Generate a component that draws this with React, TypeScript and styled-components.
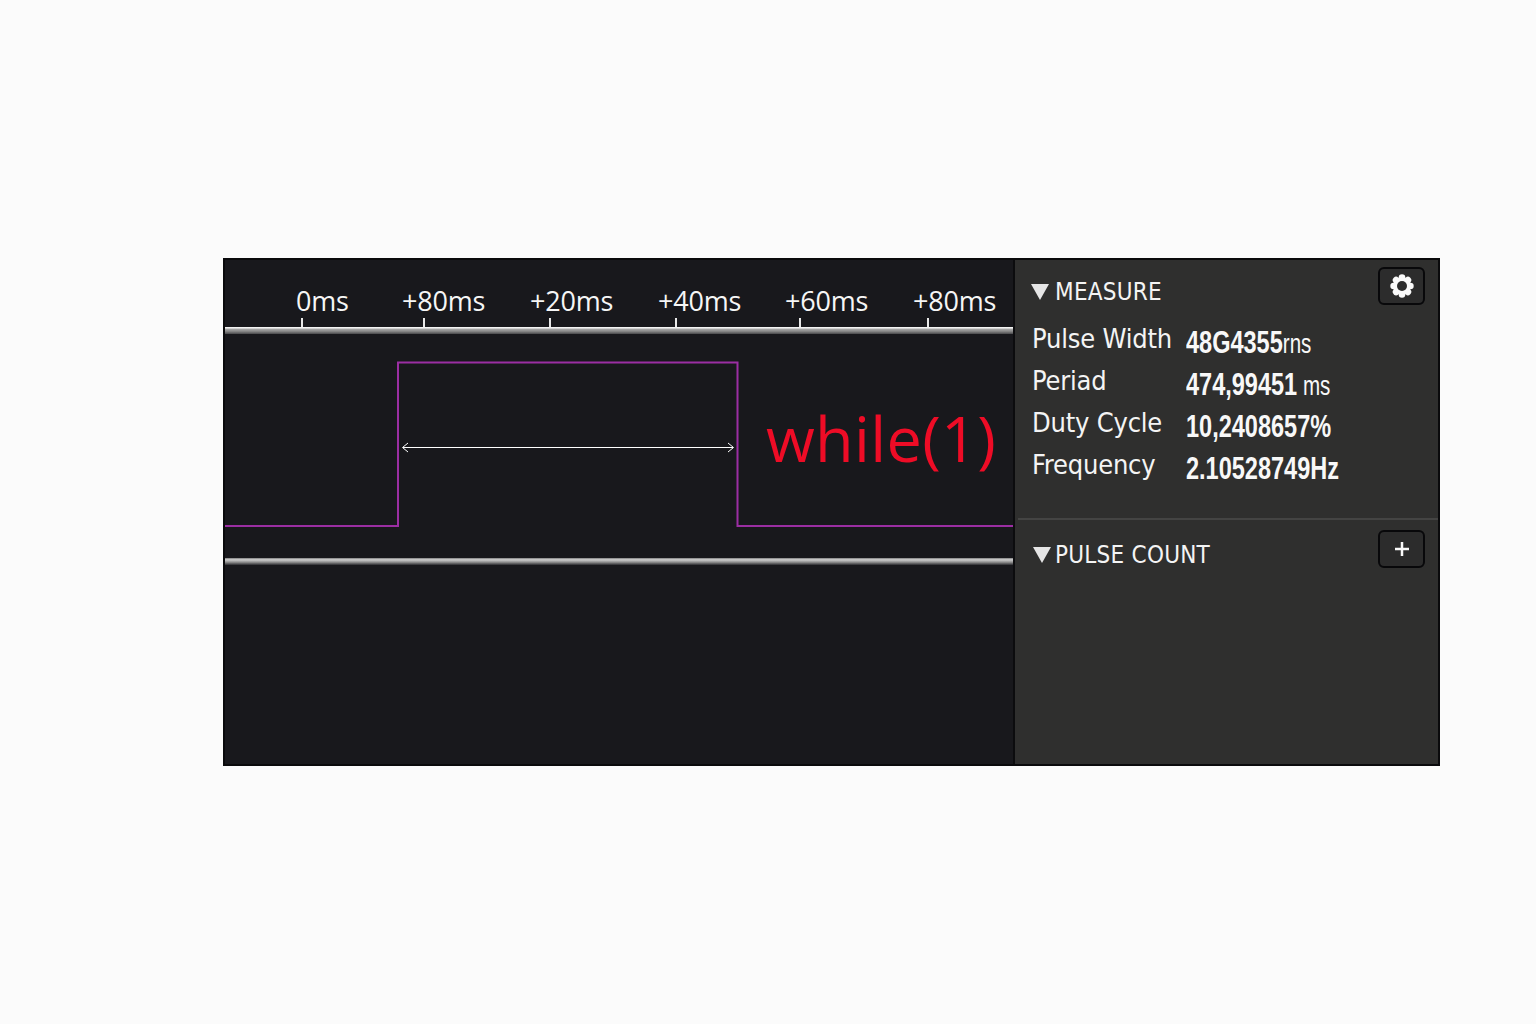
import { Fragment } from "react";
import styled, { createGlobalStyle } from "styled-components";

const GlobalStyle = createGlobalStyle`
    html, body {
        margin: 0;
        padding: 0;
        background: #fbfbfb;
    }
`;

const Page = styled.div`
    width: 1536px;
    height: 1024px;
    padding: 258px 0 0 223px;
    box-sizing: border-box;
`;

const Frame = styled.div`
    width: 1217px;
    height: 508px;
    box-sizing: border-box;
    border: 2px solid #0a0a0c;
    display: flex;
    background: #18181c;
`;

const Plot = styled.div`
    width: 788px;
    display: flex;
    flex-direction: column;
`;

const Axis = styled.div`
    height: 67px;
    padding-left: 71px;
    box-sizing: border-box;
    display: flex;
    align-items: flex-end;
`;

const AxisCell = styled.div<{ $width: number }>`
    width: ${props => props.$width}px;
    display: flex;
    flex-direction: column;
`;

const AxisLabel = styled.span`
    font-family: "Open Sans", "Noto Sans", sans-serif;
    font-size: 27px;
    line-height: 28px;
    letter-spacing: -0.2px;
    color: #f6f6f6;
    white-space: nowrap;
`;

const AxisTick = styled.span<{ $offset: number }>`
    width: 2px;
    height: 9px;
    margin-left: ${props => props.$offset}px;
    margin-top: 3px;
    background: #e8e8e8;
`;

const Rail = styled.div<{ $lower?: boolean }>`
    height: 7px;
    flex-shrink: 0;
    background: ${props => props.$lower
        ? "linear-gradient(180deg, #808080 0%, #cfcfcf 25%, #8f8f8f 60%, #2c2c30 100%)"
        : "linear-gradient(180deg, #f6f6f6 0%, #f0f0f0 15%, #a8a8a8 30%, #8a8a8a 60%, #48484b 100%)"};
`;

const WaveArea = styled.div`
    position: relative;
    height: 224px;
`;

const WaveSvg = styled.svg`
    display: block;
`;

const LoopLabel = styled.span`
    position: absolute;
    left: 541px;
    top: 62px;
    font-family: "Open Sans", "Noto Sans", sans-serif;
    font-size: 63px;
    line-height: 84px;
    letter-spacing: 0.3px;
    color: #ee0c26;
    white-space: nowrap;
`;

const Empty = styled.div`
    flex: 1;
`;

const Panel = styled.div`
    flex: 1;
    border-left: 2px solid #0c0c0e;
    background: #2f2f2e;
    display: flex;
    flex-direction: column;
`;

const Section = styled.section<{ $height?: number; $top: number; $right: number }>`
    height: ${props => props.$height ? `${props.$height}px` : "auto"};
    padding: ${props => props.$top}px ${props => props.$right}px 0 16px;
    box-sizing: border-box;
`;

const SectionHeader = styled.div`
    height: 48px;
    display: flex;
    align-items: center;
`;

const Triangle = styled.span<{ $inset: number }>`
    width: 0;
    height: 0;
    border-left: 9px solid transparent;
    border-right: 9px solid transparent;
    border-top: 16px solid #e6e6e6;
    margin: 12px ${props => 6 - props.$inset}px 0 ${props => props.$inset}px;
`;

const SectionTitle = styled.h2`
    margin: 11px 0 0;
    flex: 1;
    font-family: "DejaVu Sans Condensed", "Open Sans", sans-serif;
    font-weight: 400;
    font-size: 24px;
    line-height: 32px;
    letter-spacing: 0.25px;
    color: #f4f4f4;
    white-space: nowrap;
`;

const IconButton = styled.button`
    width: 47px;
    height: 38px;
    padding: 0;
    box-sizing: border-box;
    border: 2px solid #08080a;
    border-radius: 6px;
    background: #2c2c2c;
    display: flex;
    align-items: center;
    justify-content: center;
`;

const Readouts = styled.dl`
    margin: 8px 0 0;
    display: grid;
    grid-template-columns: 154px 1fr;
    grid-auto-rows: 42px;
    padding-left: 1px;
`;

const ReadoutLabel = styled.dt`
    font-family: "DejaVu Sans Condensed", "Open Sans", sans-serif;
    font-size: 27px;
    line-height: 42px;
    letter-spacing: -0.2px;
    color: #f4f4f4;
    white-space: nowrap;
`;

const ReadoutValue = styled.dd`
    margin: 3px 0 0;
    font-family: "Liberation Sans", Arial, sans-serif;
    font-weight: 700;
    font-size: 32px;
    line-height: 42px;
    color: #f8f8f8;
    white-space: nowrap;
    transform: scaleX(0.735);
    transform-origin: left center;
`;

const Unit = styled.span`
    font-weight: 400;
    font-size: 28px;
`;

const Divider = styled.hr`
    margin: 0 0 0 3px;
    height: 2px;
    border: none;
    background: #444443;
`;

const ticks = [
    { label: "0ms", width: 106, offset: 5 },
    { label: "+80ms", width: 128, offset: 21 },
    { label: "+20ms", width: 128, offset: 19 },
    { label: "+40ms", width: 127, offset: 17 },
    { label: "+60ms", width: 128, offset: 14 },
    { label: "+80ms", width: 84, offset: 14 },
];

const readouts = [
    { label: "Pulse Width", value: "48G4355", unit: "rns" },
    { label: "Periad", value: "474,99451", unit: " ms" },
    { label: "Duty Cycle", value: "10,2408657%", unit: "" },
    { label: "Frequency", value: "2.10528749Hz", unit: "" },
];

function Waveform() {
    return (
        <WaveSvg width="788" height="224" viewBox="0 0 788 224">
            <path d="M0 192H173V28.500H512.500V192H788" fill="none" stroke="#9b2ea3" strokeWidth="2" />
            <path d="M178 113.500H508" stroke="#ffffff" strokeWidth="1" />
            <path d="M183 109L177.500 113.500L183 118M503 109L508.500 113.500L503 118" fill="none" stroke="#ffffff" strokeWidth="1" />
        </WaveSvg>
    );
}

function GearIcon() {
    const lobes = [0, 45, 90, 135, 180, 225, 270, 315];
    return (
        <svg width="26" height="26" viewBox="0 0 26 26">
            <circle cx="13" cy="13" r="9" fill="#fafafa" />
            {lobes.map(angle => (
                <circle key={angle} cx="13" cy="4.600" r="3.300" fill="#fafafa" transform={`rotate(${angle} 13 13)`} />
            ))}
            <circle cx="13" cy="13" r="5" fill="#2c2c2c" />
        </svg>
    );
}

export default function App() {
    return (
        <Page>
            <GlobalStyle />
            <Frame>
                <Plot>
                    <Axis>
                        {ticks.map((tick, index) => (
                            <AxisCell key={index} $width={tick.width}>
                                <AxisLabel>{tick.label}</AxisLabel>
                                <AxisTick $offset={tick.offset} />
                            </AxisCell>
                        ))}
                    </Axis>
                    <Rail />
                    <WaveArea>
                        <Waveform />
                        <LoopLabel>while(1)</LoopLabel>
                    </WaveArea>
                    <Rail $lower />
                    <Empty />
                </Plot>
                <Panel>
                    <Section $height={258} $top={2} $right={13}>
                        <SectionHeader>
                            <Triangle $inset={0} />
                            <SectionTitle>MEASURE</SectionTitle>
                            <IconButton aria-label="Settings"><GearIcon /></IconButton>
                        </SectionHeader>
                        <Readouts>
                            {readouts.map(item => (
                                <Fragment key={item.label}>
                                    <ReadoutLabel>{item.label}</ReadoutLabel>
                                    <ReadoutValue>{item.value}<Unit>{item.unit}</Unit></ReadoutValue>
                                </Fragment>
                            ))}
                        </Readouts>
                    </Section>
                    <Divider />
                    <Section $top={5} $right={13}>
                        <SectionHeader>
                            <Triangle $inset={2} />
                            <SectionTitle>PULSE COUNT</SectionTitle>
                            <IconButton aria-label="Add">
                                <svg width="18" height="18" viewBox="0 0 18 18">
                                    <path d="M9 2V16M2 9H16" stroke="#fafafa" strokeWidth="2.500" />
                                </svg>
                            </IconButton>
                        </SectionHeader>
                    </Section>
                </Panel>
            </Frame>
        </Page>
    );
}
